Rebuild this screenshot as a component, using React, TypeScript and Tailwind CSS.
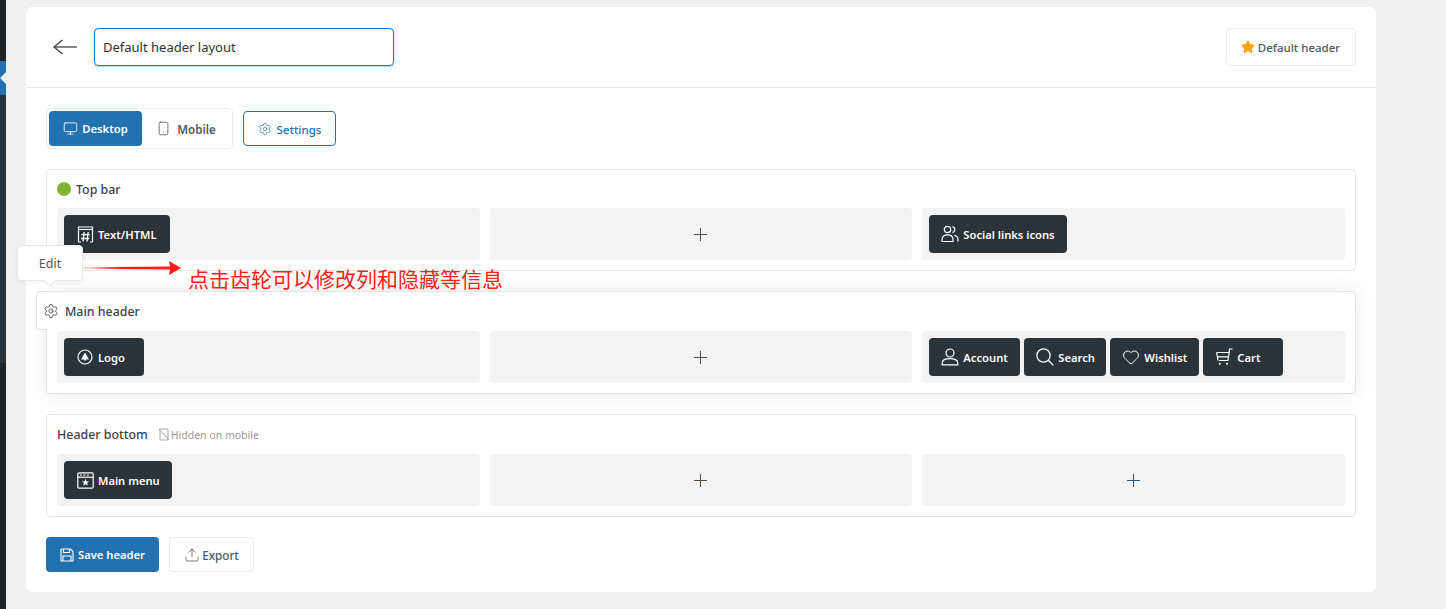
import type { ReactNode } from "react";
import { Heart, Monitor, Settings, Smartphone, Star, Upload } from "lucide-react";

const font = { fontFamily: '"Noto Sans", "Noto Sans CJK SC", sans-serif' };

function BackArrow() {
    return (
        <svg width="26" height="16" viewBox="0 0 26 16" fill="none" stroke="#3c434a" strokeWidth="1.3">
            <path d="M25 8H2" />
            <path d="M10.5 1L2 8L10.5 15" />
        </svg>
    );
}

function HashIcon() {
    return (
        <svg width="17" height="17" viewBox="0 0 17 17" fill="none" stroke="currentColor" strokeWidth="1.2">
            <path d="M1.5 16V1H15.5V16" />
            <path d="M1.5 16H4M15.5 16H13M1.5 3.5H15.5" />
            <path d="M7.2 6L6 15.5M11.2 6L10 15.5M4.5 8.7H12.7M4 12.5H12.2" strokeWidth="1.3" />
        </svg>
    );
}

function LogoIcon() {
    return (
        <svg width="16" height="16" viewBox="0 0 16 16" fill="none">
            <circle cx="8" cy="8" r="7" stroke="currentColor" strokeWidth="1.2" />
            <path d="M8 3.5L12 10.5H9L8 12.5L7 10.5H4Z" fill="currentColor" />
        </svg>
    );
}

function MenuIcon() {
    return (
        <svg width="17" height="17" viewBox="0 0 17 17" fill="none" stroke="currentColor" strokeWidth="1.2">
            <rect x="0.8" y="0.8" width="15.4" height="15.4" rx="1.2" />
            <path d="M0.8 5.2H16.2" />
            <path d="M2.8 3H5M6.3 3H8.5M9.8 3H12" />
            <path d="M8.5 6.8L9.6 9.4H12.2L10.1 11.1L10.8 13.6L8.5 12.2L6.2 13.6L6.9 11.1L4.8 9.4H7.4Z" fill="currentColor" stroke="none" />
        </svg>
    );
}

function UsersIcon() {
    return (
        <svg width="18" height="18" viewBox="0 0 18 18" fill="none" stroke="currentColor" strokeWidth="1.2">
            <circle cx="6.5" cy="4.5" r="3.2" />
            <path d="M1 16.5V14.5C1 11.5 3.5 9.8 6.5 9.8C9.5 9.8 12 11.5 12 14.5V16.5Z" />
            <path d="M11.5 1.6A3.1 3.1 0 0 1 11.5 7.6" />
            <path d="M13.5 10.2C15.6 11 17 12.5 17 14.5V16.5" />
        </svg>
    );
}

function AccountIcon() {
    return (
        <svg width="18" height="18" viewBox="0 0 18 18" fill="none" stroke="currentColor" strokeWidth="1.2">
            <circle cx="9" cy="5" r="4" />
            <path d="M1.2 16.8V15C1.2 12 4.5 10.6 9 10.6C13.5 10.6 16.8 12 16.8 15V16.8Z" />
        </svg>
    );
}

function SearchIcon() {
    return (
        <svg width="18" height="18" viewBox="0 0 18 18" fill="none" stroke="currentColor" strokeWidth="1.3">
            <circle cx="7.5" cy="7.5" r="6.6" />
            <path d="M12.3 12.3L17.4 17.4" />
        </svg>
    );
}

function CartIcon() {
    return (
        <svg width="17" height="18" viewBox="0 0 17 18" fill="none" stroke="currentColor" strokeWidth="1.2">
            <path d="M16.5 1H13.6L12 12.5H3" />
            <path d="M0.6 4.5H13M1.6 8.8H12.4M0.6 4.5L2 12.5" />
            <circle cx="3.8" cy="15.8" r="1" fill="currentColor" stroke="none" />
            <circle cx="11" cy="15.8" r="1" fill="currentColor" stroke="none" />
        </svg>
    );
}

function SaveIcon() {
    return (
        <svg width="14" height="14" viewBox="0 0 14 14" fill="none" stroke="currentColor" strokeWidth="1.1">
            <path d="M1.5 1H10.5L13 3.5V13H1V1.5Z" />
            <path d="M3.5 1V4.5H9.5V1M3 13V8H11V13" />
        </svg>
    );
}

function HiddenMobileIcon() {
    return (
        <svg width="12" height="13" viewBox="0 0 12 13" fill="none" stroke="currentColor" strokeWidth="0.9">
            <rect x="2" y="1" width="8" height="11" rx="0.8" />
            <path d="M1 1L11 12" />
        </svg>
    );
}

function PlusMark({ color }: { color: string }) {
    return (
        <svg width="15" height="15" viewBox="0 0 15 15" stroke={color} strokeWidth="1" shapeRendering="crispEdges" className="-ml-px">
            <path d="M7.5 1V14M1 7.5H14" />
        </svg>
    );
}

function Block({ icon, label, width }: { icon: ReactNode; label: string; width: string }) {
    return (
        <div className={`flex h-[38px] items-center gap-1 rounded-[4px] bg-[#2c3338] pl-3 text-[11.2px] font-semibold text-white ${width}`}>
            <span className="flex w-[18px] shrink-0 justify-center">{icon}</span>
            <span className="translate-y-px">{label}</span>
        </div>
    );
}

function Column({ children, plus }: { children?: ReactNode; plus?: string }) {
    return (
        <div className={`flex h-[52px] flex-1 items-center gap-1 rounded-[4px] bg-[#f3f3f3] px-[7px] ${plus ? "justify-center" : ""}`}>
            {plus ? <PlusMark color={plus} /> : children}
        </div>
    );
}

function Row({ title, children, raised, head = "h-[39px]" }: { title: ReactNode; children: ReactNode; raised?: boolean; head?: string }) {
    return (
        <section className={`relative rounded-[4px] border border-[#e4e4e4] bg-white px-[10px] pb-[10px] ${raised ? "shadow-[0_0_20px_rgba(0,0,0,0.09)]" : ""}`}>
            <div className={`flex items-center text-[12.4px] font-medium text-[#3c434a] ${head}`}>{title}</div>
            <div className="flex gap-[10px]">{children}</div>
        </section>
    );
}

export default function App() {
    return (
        <div className="flex h-[609px] overflow-hidden bg-[#f0f0f1]" style={font}>
            {/* admin sidebar edge */}
            <aside className="flex h-full w-[6px] shrink-0 flex-col bg-[#2c3338]">
                <div className="h-[61px] bg-[#1d2327]" />
                <div className="relative h-[34px] overflow-hidden bg-[#2271b1]">
                    <div className="absolute left-[3px] top-[10px] size-[14px] rotate-45 bg-[#f0f0f1]" />
                </div>
                <div className="flex-1" />
                <div className="h-[246px] bg-[#1d2327]" />
            </aside>

            <main className="ml-5 mt-[7px] h-[585px] w-[1350px] rounded-[6px] bg-white">
                <header className="flex h-[81px] items-center justify-between border-b border-[#e8e8e8] pl-[26px] pr-5">
                    <div className="flex items-center gap-4">
                        <BackArrow />
                        <div className="flex h-[38px] w-[300px] items-center rounded-[4px] border border-[#007cba] pl-2 text-[13px] text-[#2c3338] shadow-[0_1px_2px_rgba(0,124,186,0.35)]">
                            <span className="translate-y-px">Default header layout</span>
                        </div>
                    </div>
                    <div className="flex h-[38px] w-[130px] items-center justify-center gap-1 rounded-[4px] border border-[#ececec] text-[11.5px] font-medium text-[#50575e]">
                        <Star size={14} fill="#f9a60e" color="#f9a60e" />
                        <span className="-translate-x-px translate-y-px">Default header</span>
                    </div>
                </header>

                <div className="px-5 pt-5">
                    <div className="mb-5 flex items-center gap-[10px]">
                        <div className="flex h-[41px] w-[187px] items-center rounded-[4px] border border-[#ececec] px-[2px]">
                            <div className="flex h-[35px] w-[93px] items-center justify-center gap-[4px] rounded-[4px] bg-[#2271b1] text-[11.3px] font-semibold text-white">
                                <Monitor size={15} strokeWidth={1.3} />
                                <span className="translate-y-px">Desktop</span>
                            </div>
                            <div className="flex h-[35px] flex-1 items-center justify-center gap-[6px] text-[11.6px] font-semibold text-[#50575e]">
                                <Smartphone size={15} strokeWidth={1.3} />
                                <span className="translate-y-px">Mobile</span>
                            </div>
                        </div>
                        <div className="flex h-[35px] w-[93px] items-center justify-center gap-[5px] rounded-[4px] border border-[#2271b1] text-[11.5px] font-medium text-[#2271b1]">
                            <Settings size={14} strokeWidth={1.2} />
                            <span className="translate-y-px">Settings</span>
                        </div>
                    </div>

                    <div className="flex flex-col gap-5">
                        <Row head="h-[38px]" title={<><span className="mr-[5px] size-[14px] rounded-full bg-[#82b431]" /><span className="translate-y-px">Top bar</span></>}>
                            <Column>
                                <Block icon={<HashIcon />} label="Text/HTML" width="w-[106px]" />
                            </Column>
                            <Column plus="#5f4c3c" />
                            <Column>
                                <Block icon={<UsersIcon />} label="Social links icons" width="w-[138px]" />
                            </Column>
                        </Row>

                        <Row raised title={<span className="translate-y-px pl-2">Main header</span>}>
                            <Column>
                                <Block icon={<LogoIcon />} label="Logo" width="w-[80px]" />
                            </Column>
                            <Column plus="#5f4c3c" />
                            <Column>
                                <Block icon={<AccountIcon />} label="Account" width="w-[91px]" />
                                <Block icon={<SearchIcon />} label="Search" width="w-[82px]" />
                                <Block icon={<Heart size={20} strokeWidth={1.3} />} label="Wishlist" width="w-[89px]" />
                                <Block icon={<CartIcon />} label="Cart" width="w-[80px]" />
                            </Column>
                            {/* hovered gear tab */}
                            <div className="absolute -left-[11px] -top-px h-[39px] w-3 rounded-l-[4px] border border-r-0 border-[#e4e4e4] bg-white text-[#3c434a]">
                                <Settings size={16} strokeWidth={1.2} className="absolute left-[6px] top-[11px] max-w-none" />
                            </div>
                        </Row>

                        <Row
                            title={
                                <>
                                    <span className="translate-y-px">Header bottom</span>
                                    <span className="ml-[10px] flex items-center gap-[1px] text-[10.5px] font-normal text-[#999]">
                                        <HiddenMobileIcon />
                                        <span className="translate-y-px">Hidden on mobile</span>
                                    </span>
                                </>
                            }
                        >
                            <Column>
                                <Block icon={<MenuIcon />} label="Main menu" width="w-[108px]" />
                            </Column>
                            <Column plus="#5f4c3c" />
                            <Column plus="#34587a" />
                        </Row>
                    </div>

                    <div className="mt-5 flex gap-[10px]">
                        <div className="flex h-[35px] w-[113px] items-center justify-center gap-[4px] rounded-[4px] bg-[#2271b1] text-[11.2px] font-semibold text-white">
                            <SaveIcon />
                            <span className="translate-y-px">Save header</span>
                        </div>
                        <div className="flex h-[35px] w-[85px] items-center justify-center gap-[2px] rounded-[4px] border border-[#ececec] text-[11.7px] font-medium text-[#50575e]">
                            <Upload size={16} strokeWidth={1.2} />
                            <span className="translate-y-px">Export</span>
                        </div>
                    </div>
                </div>
            </main>

            {/* Edit tooltip */}
            <div className="absolute left-[17px] top-[245px] flex h-[36px] w-[66px] items-center justify-center rounded-[4px] border border-[#e8e8e8] bg-white text-[12.5px] text-[#50575e] shadow-[0_1px_4px_rgba(0,0,0,0.06)]">
                <span className="translate-y-px">Edit</span>
                <span className="absolute -bottom-[5px] left-[28px] size-2 rotate-45 border-b border-r border-[#e8e8e8] bg-white" />
            </div>

            {/* red annotation */}
            <svg className="absolute left-[82px] top-[260px]" width="100" height="16" viewBox="0 0 100 16">
                <defs>
                    <linearGradient id="fade" x1="0" x2="1" y1="0" y2="0">
                        <stop offset="0" stopColor="#ff1f14" stopOpacity="0.15" />
                        <stop offset="0.4" stopColor="#ff1f14" />
                    </linearGradient>
                </defs>
                <path d="M0 7.2L88 6.5L87 1L99 8L87 15L88 9.5L0 8.8Z" fill="url(#fade)" />
            </svg>
            <div className="absolute left-[188px] top-[263px] text-[21px] leading-[30px] text-[#ff1f14]" style={{ fontFamily: '"Noto Sans CJK SC", sans-serif' }}>
                点击齿轮可以修改列和隐藏等信息
            </div>
        </div>
    );
}
